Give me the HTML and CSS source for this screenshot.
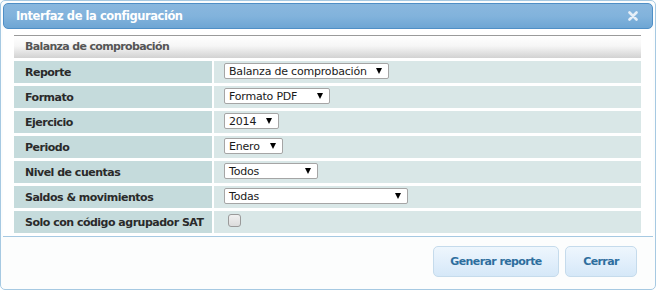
FILE: index.html
```html
<!DOCTYPE html>
<html lang="es">
<head>
<meta charset="utf-8">
<title>Interfaz de la configuración</title>
<link rel="stylesheet" href="styles.css">
</head>
<body>
<div class="dialog">
  <div class="titlebar">
    <span class="title">Interfaz de la configuración</span>
    <svg class="close" width="10" height="10" viewBox="0 0 10 10"><path d="M1.5 1.5 L8.5 8.5 M8.5 1.5 L1.5 8.5" stroke="#e6eff8" stroke-width="2.6" stroke-linecap="round"/></svg>
  </div>
  <div class="content">
    <div class="grid">
      <div class="head">Balanza de comprobación</div>
      <div class="lbl">Reporte</div>
      <div class="val"><span class="sel w-reporte"><span>Balanza de comprobación</span><i class="arr"></i></span></div>
      <div class="lbl">Formato</div>
      <div class="val"><span class="sel w-formato"><span>Formato PDF</span><i class="arr"></i></span></div>
      <div class="lbl">Ejercicio</div>
      <div class="val"><span class="sel w-ejercicio"><span>2014</span><i class="arr"></i></span></div>
      <div class="lbl">Periodo</div>
      <div class="val"><span class="sel w-periodo"><span>Enero</span><i class="arr"></i></span></div>
      <div class="lbl">Nivel de cuentas</div>
      <div class="val"><span class="sel w-nivel"><span>Todos</span><i class="arr"></i></span></div>
      <div class="lbl">Saldos &amp; movimientos</div>
      <div class="val"><span class="sel w-saldos"><span>Todas</span><i class="arr"></i></span></div>
      <div class="lbl">Solo con código agrupador SAT</div>
      <div class="val"><span class="chk"></span></div>
    </div>
  </div>
  <div class="buttons">
    <button class="btn btn-gen">Generar reporte</button>
    <button class="btn btn-close">Cerrar</button>
  </div>
</div>
</body>
</html>
```
FILE: styles.css
```css
html, body {
  margin: 0;
  padding: 0;
  background: #ffffff;
}
body {
  font-family: "DejaVu Sans", Verdana, sans-serif;
  font-size: 11px;
}
.dialog {
  box-sizing: border-box;
  width: 656px;
  height: 290px;
  border: 1px solid #a6c9e2;
  border-radius: 5px;
  padding: 2px;
  background: #fcfdfd;
  display: flex;
  flex-direction: column;
}
.titlebar {
  box-sizing: border-box;
  height: 26px;
  border: 1px solid #4f8fc6;
  border-radius: 5px;
  background: linear-gradient(to bottom, #89b7de 0%, #82b3dc 50%, #6ea6d4 100%);
  display: flex;
  align-items: center;
  justify-content: space-between;
  padding: 0 12px 0 12px;
}
.title {
  color: #ffffff;
  font-weight: bold;
  font-size: 11.5px;
  letter-spacing: -0.45px;
}
.close {
  display: block;
  margin-right: 2px;
}
.content {
  padding: 6px 12px 0 11px;
  background: #ffffff;
}
.grid {
  display: grid;
  grid-template-columns: 198px 1fr;
  column-gap: 2px;
  row-gap: 3px;
  padding-bottom: 3px;
}
.head {
  grid-column: 1 / 3;
  box-sizing: border-box;
  height: 23px;
  border-top: 1px solid #9a9a9a;
  background: linear-gradient(to bottom, #ffffff 0%, #f6f6f6 45%, #d2d2d2 100%);
  color: #555555;
  font-weight: bold;
  font-size: 11px;
  letter-spacing: -0.65px;
  padding-left: 11px;
  line-height: 21px;
}
.lbl {
  height: 22px;
  background: #c5dbdc;
  color: #2a2a2a;
  font-weight: bold;
  letter-spacing: -0.5px;
  padding-left: 11px;
  line-height: 24px;
  white-space: nowrap;
}
.val {
  height: 22px;
  background: #d9e7e7;
  padding-left: 10px;
  display: flex;
  align-items: flex-start;
  padding-top: 2px;
  box-sizing: border-box;
}
.sel {
  box-sizing: border-box;
  height: 16px;
  border: 1px solid #a5a5a5;
  border-radius: 2px;
  background: #ffffff;
  color: #1a1a1a;
  font-size: 11px;
  letter-spacing: -0.2px;
  line-height: 13px;
  display: flex;
  align-items: center;
  justify-content: space-between;
  padding: 0 6px 0 4px;
}
.arr {
  width: 0;
  height: 0;
  border-left: 3px solid transparent;
  border-right: 3px solid transparent;
  border-top: 6px solid #000000;
}
.w-reporte { width: 165px; }
.w-formato { width: 106px; }
.w-ejercicio { width: 55px; }
.w-periodo { width: 59px; }
.w-nivel { width: 94px; }
.w-saldos { width: 184px; }
.chk {
  box-sizing: border-box;
  width: 13px;
  height: 13px;
  margin: 1px 0 0 4px;
  border: 1px solid #9a9a9a;
  border-radius: 3px;
  background: linear-gradient(to bottom, #f0f0f0, #dcdcdc);
}
.buttons {
  flex: 1;
  border-top: 1px solid #a6c9e2;
  display: flex;
  justify-content: flex-end;
  align-items: flex-start;
  gap: 6px;
  padding: 9px 16px 0 0;
  background: #fcfdfd;
}
.btn {
  box-sizing: border-box;
  height: 31px;
  border: 1px solid #c5dbec;
  border-radius: 5px;
  background: linear-gradient(to bottom, #eef6fd 0%, #e2effb 50%, #d5e8f8 100%);
  color: #2e6e9e;
  font-family: "DejaVu Sans", Verdana, sans-serif;
  font-weight: bold;
  font-size: 11px;
  letter-spacing: -0.6px;
  padding: 0;
}
.btn-gen { width: 126px; }
.btn-close { width: 72px; }
```
